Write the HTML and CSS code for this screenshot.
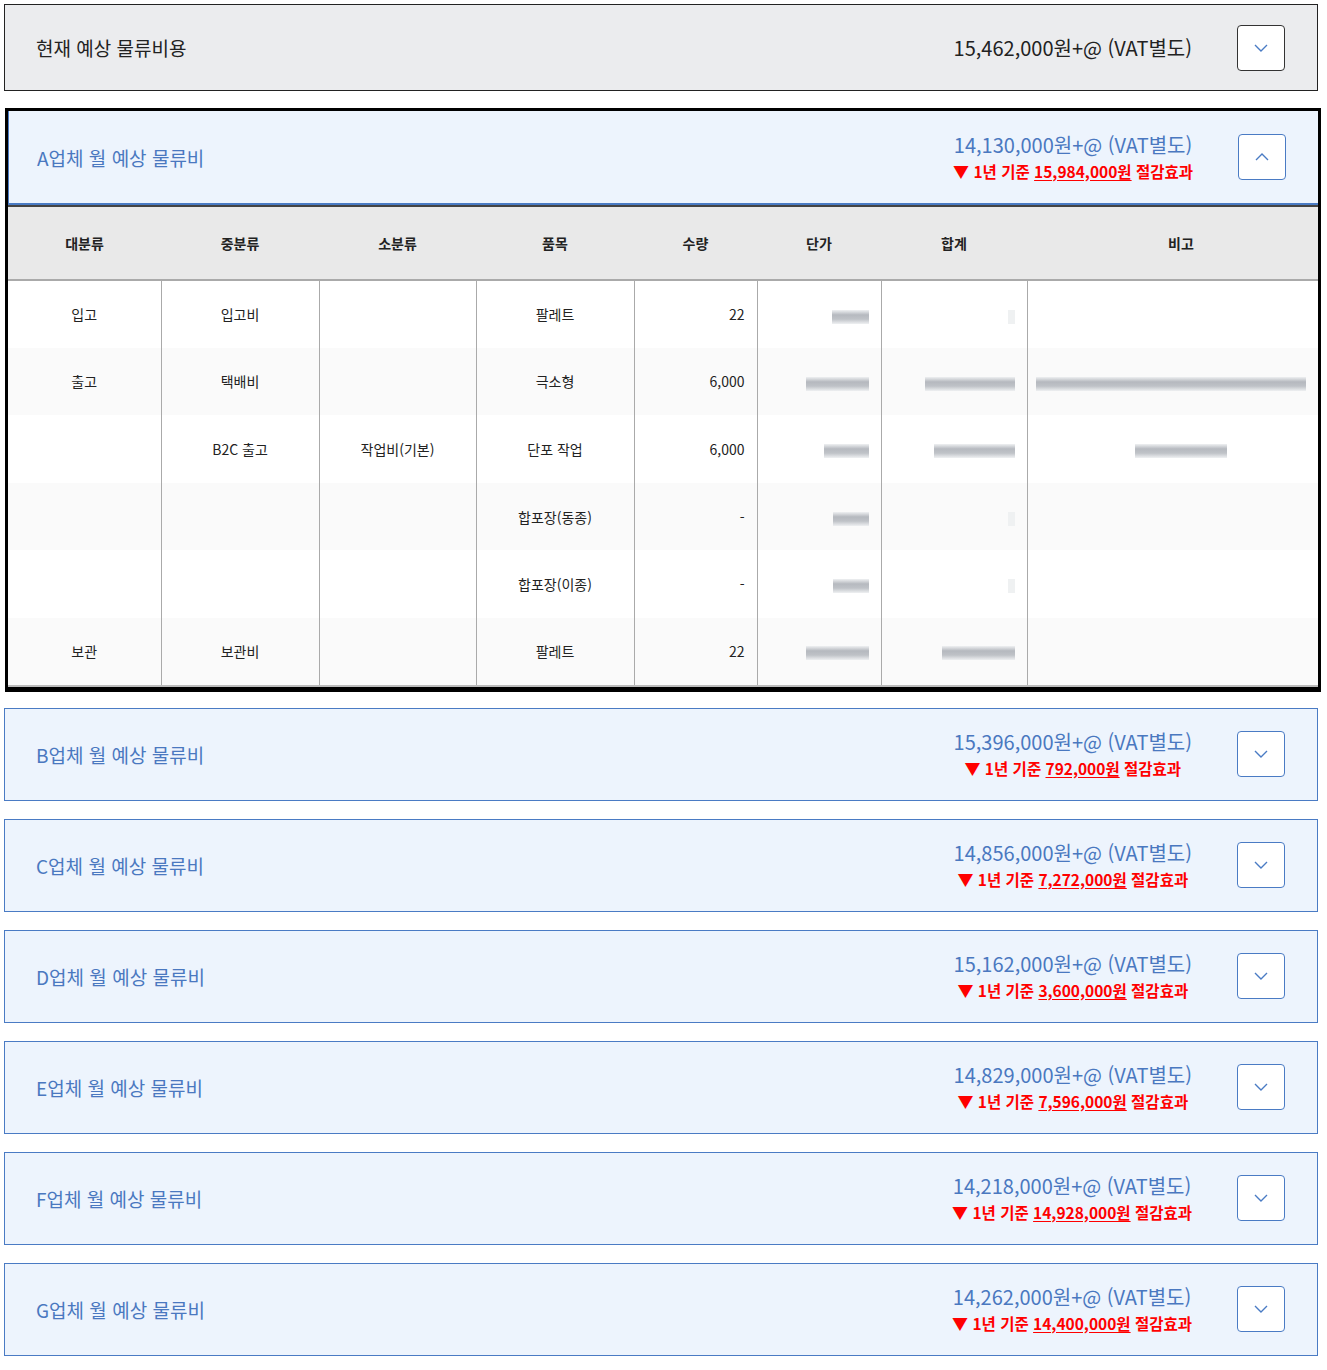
FILE: index.html
```html
<!DOCTYPE html>
<html lang="ko">
<head>
    <meta charset="UTF-8">
    <meta name="viewport" content="width=device-width, initial-scale=1.0">
    <title>예상 물류비용</title>
    <link rel="stylesheet" href="styles.css">
</head>
<body>
    <div class="cost-list">
        <!-- 현재 비용 -->
        <section class="cost-item current">
            <div class="cost-head">
                <span class="cost-title">현재 예상 물류비용</span>
                <div class="cost-sum">
                    <p class="price">15,462,000원+@ (VAT별도)</p>
                </div>
                <button class="toggle"><svg width="14" height="8" viewBox="0 0 14 8"><path d="M1 1l6 6 6-6" fill="none" stroke="#4a7bc4" stroke-width="1.4"/></svg></button>
            </div>
        </section>

        <!-- A업체 (펼침) -->
        <section class="cost-item vendor open">
            <div class="cost-head">
                <span class="cost-title">A업체 월 예상 물류비</span>
                <div class="cost-sum">
                    <p class="price">14,130,000원+@ (VAT별도)</p>
                    <p class="saving"><span class="arrow">▼</span> 1년 기준 <u>15,984,000원</u> 절감효과</p>
                </div>
                <button class="toggle"><svg width="14" height="8" viewBox="0 0 14 8"><path d="M1 7l6-6 6 6" fill="none" stroke="#4a7bc4" stroke-width="1.4"/></svg></button>
            </div>
            <table class="cost-table">
                <colgroup>
                    <col style="width:153px"><col style="width:158px"><col style="width:157px"><col style="width:158px">
                    <col style="width:123px"><col style="width:124px"><col style="width:146px"><col>
                </colgroup>
                <thead>
                    <tr>
                        <th>대분류</th><th>중분류</th><th>소분류</th><th>품목</th><th>수량</th><th>단가</th><th>합계</th><th class="note">비고</th>
                    </tr>
                </thead>
                <tbody>
                    <tr>
                        <td>입고</td><td>입고비</td><td></td><td>팔레트</td><td class="num">22</td>
                        <td class="num"><span class="blur" style="width:37px"></span></td>
                        <td class="num"><span class="blur dot"></span></td>
                        <td></td>
                    </tr>
                    <tr>
                        <td>출고</td><td>택배비</td><td></td><td>극소형</td><td class="num">6,000</td>
                        <td class="num"><span class="blur" style="width:63px"></span></td>
                        <td class="num"><span class="blur" style="width:90px"></span></td>
                        <td class="num"><span class="blur" style="width:270px"></span></td>
                    </tr>
                    <tr>
                        <td></td><td>B2C 출고</td><td>작업비(기본)</td><td>단포 작업</td><td class="num">6,000</td>
                        <td class="num"><span class="blur" style="width:45px"></span></td>
                        <td class="num"><span class="blur" style="width:81px"></span></td>
                        <td class="note"><span class="blur" style="width:92px"></span></td>
                    </tr>
                    <tr>
                        <td></td><td></td><td></td><td>합포장(동종)</td><td class="num">-</td>
                        <td class="num"><span class="blur" style="width:36px"></span></td>
                        <td class="num"><span class="blur dot"></span></td>
                        <td></td>
                    </tr>
                    <tr>
                        <td></td><td></td><td></td><td>합포장(이종)</td><td class="num">-</td>
                        <td class="num"><span class="blur" style="width:36px"></span></td>
                        <td class="num"><span class="blur dot"></span></td>
                        <td></td>
                    </tr>
                    <tr>
                        <td>보관</td><td>보관비</td><td></td><td>팔레트</td><td class="num">22</td>
                        <td class="num"><span class="blur" style="width:63px"></span></td>
                        <td class="num"><span class="blur" style="width:73px"></span></td>
                        <td></td>
                    </tr>
                </tbody>
            </table>
        </section>

        <section class="cost-item vendor">
            <div class="cost-head">
                <span class="cost-title">B업체 월 예상 물류비</span>
                <div class="cost-sum">
                    <p class="price">15,396,000원+@ (VAT별도)</p>
                    <p class="saving"><span class="arrow">▼</span> 1년 기준 <u>792,000원</u> 절감효과</p>
                </div>
                <button class="toggle"><svg width="14" height="8" viewBox="0 0 14 8"><path d="M1 1l6 6 6-6" fill="none" stroke="#4a7bc4" stroke-width="1.4"/></svg></button>
            </div>
        </section>

        <section class="cost-item vendor">
            <div class="cost-head">
                <span class="cost-title">C업체 월 예상 물류비</span>
                <div class="cost-sum">
                    <p class="price">14,856,000원+@ (VAT별도)</p>
                    <p class="saving"><span class="arrow">▼</span> 1년 기준 <u>7,272,000원</u> 절감효과</p>
                </div>
                <button class="toggle"><svg width="14" height="8" viewBox="0 0 14 8"><path d="M1 1l6 6 6-6" fill="none" stroke="#4a7bc4" stroke-width="1.4"/></svg></button>
            </div>
        </section>

        <section class="cost-item vendor">
            <div class="cost-head">
                <span class="cost-title">D업체 월 예상 물류비</span>
                <div class="cost-sum">
                    <p class="price">15,162,000원+@ (VAT별도)</p>
                    <p class="saving"><span class="arrow">▼</span> 1년 기준 <u>3,600,000원</u> 절감효과</p>
                </div>
                <button class="toggle"><svg width="14" height="8" viewBox="0 0 14 8"><path d="M1 1l6 6 6-6" fill="none" stroke="#4a7bc4" stroke-width="1.4"/></svg></button>
            </div>
        </section>

        <section class="cost-item vendor">
            <div class="cost-head">
                <span class="cost-title">E업체 월 예상 물류비</span>
                <div class="cost-sum">
                    <p class="price">14,829,000원+@ (VAT별도)</p>
                    <p class="saving"><span class="arrow">▼</span> 1년 기준 <u>7,596,000원</u> 절감효과</p>
                </div>
                <button class="toggle"><svg width="14" height="8" viewBox="0 0 14 8"><path d="M1 1l6 6 6-6" fill="none" stroke="#4a7bc4" stroke-width="1.4"/></svg></button>
            </div>
        </section>

        <section class="cost-item vendor">
            <div class="cost-head">
                <span class="cost-title">F업체 월 예상 물류비</span>
                <div class="cost-sum">
                    <p class="price">14,218,000원+@ (VAT별도)</p>
                    <p class="saving"><span class="arrow">▼</span> 1년 기준 <u>14,928,000원</u> 절감효과</p>
                </div>
                <button class="toggle"><svg width="14" height="8" viewBox="0 0 14 8"><path d="M1 1l6 6 6-6" fill="none" stroke="#4a7bc4" stroke-width="1.4"/></svg></button>
            </div>
        </section>

        <section class="cost-item vendor">
            <div class="cost-head">
                <span class="cost-title">G업체 월 예상 물류비</span>
                <div class="cost-sum">
                    <p class="price">14,262,000원+@ (VAT별도)</p>
                    <p class="saving"><span class="arrow">▼</span> 1년 기준 <u>14,400,000원</u> 절감효과</p>
                </div>
                <button class="toggle"><svg width="14" height="8" viewBox="0 0 14 8"><path d="M1 1l6 6 6-6" fill="none" stroke="#4a7bc4" stroke-width="1.4"/></svg></button>
            </div>
        </section>
    </div>
</body>
</html>
```

FILE: styles.css
```css
/* 물류비 비교 목록 */
body {
    font-family: "Noto Sans CJK KR", "Noto Sans", sans-serif;
    margin: 0;
    padding: 4px 0 0 4px;
    background-color: #fff;
    color: #222;
}

* {
    box-sizing: border-box;
}

p {
    margin: 0;
}

.cost-list {
    width: 1314px;
    display: flex;
    flex-direction: column;
    gap: 18px;
}

.cost-item {
    border: 1px solid #4a7bc4;
    background-color: #edf4fd;
}

.cost-item.current {
    border-color: #222;
    background-color: #ebecee;
    margin-bottom: -1px;
}

.cost-item.open {
    border: 3px solid #000;
    border-bottom-width: 5px;
    width: 1316px;
    margin-left: 1px;
    margin-bottom: -2px;
    background-color: #fff;
}

.cost-head {
    display: flex;
    align-items: center;
    height: 91px;
    padding: 0 32px 0 31px;
}

.current .cost-head {
    height: 85px;
}

.open .cost-head {
    height: 94px;
    padding-left: 28px;
    padding-right: 32px;
    background-color: #edf4fd;
    border-left: 1px solid #4a7bc4;
    border-bottom: 2px solid #4a7bc4;
}

.cost-title {
    flex: 1;
    font-size: 19px;
    color: #4a78c0;
}

.current .cost-title {
    color: #222;
}

.cost-sum {
    text-align: center;
    margin-right: 45px;
}

.price {
    font-size: 20px;
    line-height: 28px;
    color: #4a78c0;
}

.current .price {
    color: #222;
}

.saving {
    font-size: 15.5px;
    line-height: 24px;
    font-weight: 700;
    color: #f00;
}

.saving u {
    text-underline-offset: 2px;
}

.arrow {
    font-size: 16px;
}

.toggle {
    width: 48px;
    height: 46px;
    background-color: #fff;
    border: 1px solid #4a7bc4;
    border-radius: 4px;
    display: flex;
    align-items: center;
    justify-content: center;
    padding: 0;
}

.current .toggle {
    border-color: #333;
}

/* 상세 테이블 */
.cost-table {
    width: 100%;
    table-layout: fixed;
    border-collapse: collapse;
    font-size: 14px;
    border-bottom: 2px solid #bbb;
}

.cost-table th {
    height: 74px;
    background-color: #e9e9e9;
    font-weight: 700;
    border-top: 2px solid #444;
    border-bottom: 2px solid #aaa;
}

.cost-table td {
    height: 67.6px;
    text-align: center;
    border-left: 1px solid #aaa;
}

.cost-table td:first-child {
    border-left: none;
}

.cost-table tbody tr:nth-child(even) td {
    background-color: #fafafa;
}

.cost-table .num {
    text-align: right;
    padding-right: 12px;
}

.cost-table th.note,
.cost-table td.note {
    padding-left: 18px;
}

.blur {
    display: inline-block;
    height: 14px;
    vertical-align: middle;
    background: linear-gradient(#eceef0, #a9adb4 35%, #b4b8be 65%, #eceef0);
    opacity: 0.85;
}

.blur.dot {
    width: 7px;
    background: #eceef0;
}
```
